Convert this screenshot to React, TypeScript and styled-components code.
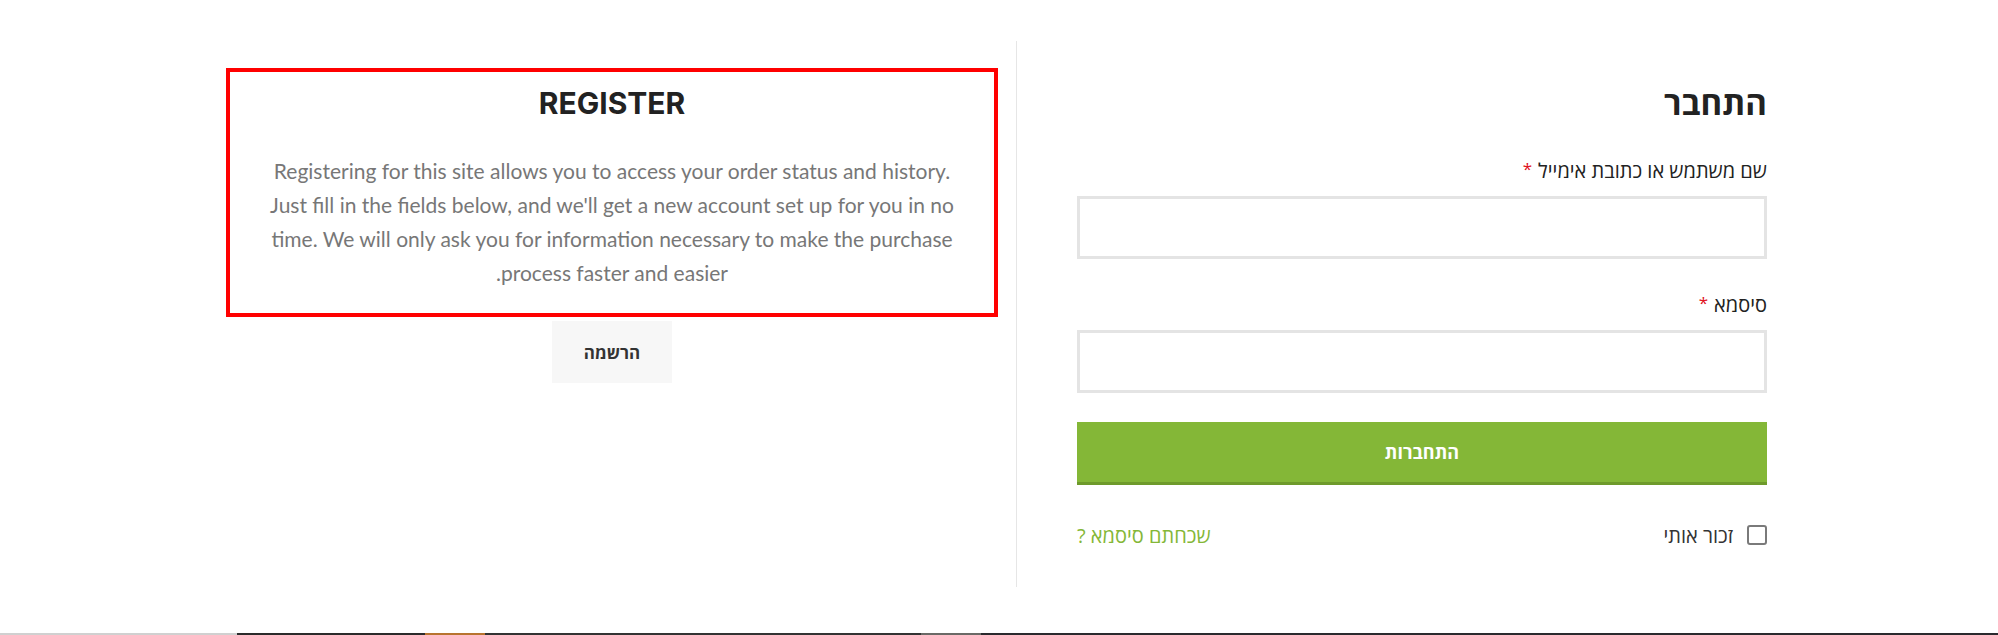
import styled, { createGlobalStyle } from "styled-components";

const GlobalStyle = createGlobalStyle`
  html, body {
    margin: 0;
    padding: 0;
    background: #ffffff;
  }
  * {
    box-sizing: border-box;
  }
`;

const Page = styled.div`
  width: 1998px;
  height: 635px;
  overflow: hidden;
  display: flex;
  flex-direction: column;
  font-family: "Open Sans", "Noto Sans", sans-serif;
`;

const Row = styled.div`
  direction: rtl;
  display: flex;
  align-items: flex-start;
  margin: 41px 231px 0 0;
  height: 592px;
`;

const LoginCol = styled.div`
  width: 690px;
  display: flex;
  flex-direction: column;
`;

const Divider = styled.div`
  width: 1px;
  height: 546px;
  background: #e6e6e6;
  margin: 0 60px 0 18px;
`;

const RegisterCol = styled.div`
  width: 772px;
  margin-top: 27px;
  display: flex;
  flex-direction: column;
  align-items: center;
`;

const RegisterBox = styled.div`
  width: 100%;
  height: 249px;
  border: 4px solid #ff0000;
  padding: 11px 36px 0;
  text-align: center;
`;

const RegisterTitle = styled.h2`
  margin: 0;
  direction: ltr;
  font-family: "Inter", "Roboto", sans-serif;
  font-weight: 700;
  font-size: 30px;
  line-height: 40px;
  color: #222222;
`;

const RegisterText = styled.p`
  margin: 31px 0 0;
  font-family: "Lato", "Open Sans", sans-serif;
  font-size: 21px;
  line-height: 34px;
  color: #777777;
`;

const GreyButton = styled.button`
  margin-top: 4px;
  width: 120px;
  height: 62px;
  border: none;
  background: #f7f7f7;
  font-family: "Open Sans", "Noto Sans", sans-serif;
  font-weight: 700;
  font-size: 17px;
  color: #333333;
  cursor: pointer;
`;

const Heading = styled.h2`
  margin: 42px 0 0;
  font-weight: 700;
  font-size: 33px;
  line-height: 40px;
  color: #222222;
`;

const Label = styled.label<{ $gap: number }>`
  display: block;
  height: 24px;
  margin-top: ${(p) => p.$gap}px;
  font-size: 20px;
  line-height: 24px;
  color: #222222;
`;

const Required = styled.span`
  position: relative;
  top: -3px;
  margin-right: 6px;
  color: #e01020;
  font-size: 17px;
`;

const Input = styled.input`
  display: block;
  width: 100%;
  height: 63px;
  margin-top: 13px;
  border: 3px solid #e4e4e4;
  background: #ffffff;
  outline: none;
`;

const SubmitButton = styled.button`
  margin-top: 29px;
  width: 100%;
  height: 63px;
  border: none;
  border-bottom: 3px solid #6e9a2b;
  background: #84b737;
  color: #ffffff;
  font-family: "Open Sans", "Noto Sans", sans-serif;
  font-weight: 700;
  font-size: 18px;
  cursor: pointer;
`;

const BottomRow = styled.div`
  margin-top: 38px;
  display: flex;
  align-items: center;
  justify-content: space-between;
  height: 24px;
`;

const Remember = styled.label`
  display: flex;
  align-items: center;
  gap: 14px;
  font-size: 20px;
  color: #333333;
`;

const Box = styled.span`
  width: 20px;
  height: 20px;
  border: 2px solid #7a7a7a;
  border-radius: 3px;
  background: #ffffff;
`;

const Forgot = styled.a`
  font-size: 20px;
  color: #84b737;
  text-decoration: none;
`;

const Footer = styled.div`
  margin-top: auto;
  height: 2px;
  display: flex;
`;

const FooterPart = styled.div<{ $w: number; $c: string }>`
  width: ${(p) => p.$w}px;
  background: ${(p) => p.$c};
`;

const footerParts = [
  { w: 237, c: "#d0d0d0" },
  { w: 188, c: "#2b2b2b" },
  { w: 60, c: "#b8742f" },
  { w: 436, c: "#333333" },
  { w: 60, c: "#6a6a66" },
  { w: 1017, c: "#2a2a2e" },
];

const App = () => {
  return (
    <>
      <GlobalStyle />
      <Page>
        <Row>
          <LoginCol>
            <Heading>התחבר</Heading>
            <Label $gap={36}>
              שם משתמש או כתובת אימייל<Required>*</Required>
            </Label>
            <Input type="text" />
            <Label $gap={34}>
              סיסמא<Required>*</Required>
            </Label>
            <Input type="password" />
            <SubmitButton>התחברות</SubmitButton>
            <BottomRow>
              <Remember>
                <Box />
                זכור אותי
              </Remember>
              <Forgot href="#">שכחתם סיסמא ?</Forgot>
            </BottomRow>
          </LoginCol>
          <Divider />
          <RegisterCol>
            <RegisterBox>
              <RegisterTitle>REGISTER</RegisterTitle>
              <RegisterText>
                Registering for this site allows you to access your order status
                and history. Just fill in the fields below, and we'll get a new
                account set up for you in no time. We will only ask you for
                information necessary to make the purchase process faster and
                easier.
              </RegisterText>
            </RegisterBox>
            <GreyButton>הרשמה</GreyButton>
          </RegisterCol>
        </Row>
        <Footer>
          {footerParts.map((p, i) => (
            <FooterPart key={i} $w={p.w} $c={p.c} />
          ))}
        </Footer>
      </Page>
    </>
  );
};

export default App;
